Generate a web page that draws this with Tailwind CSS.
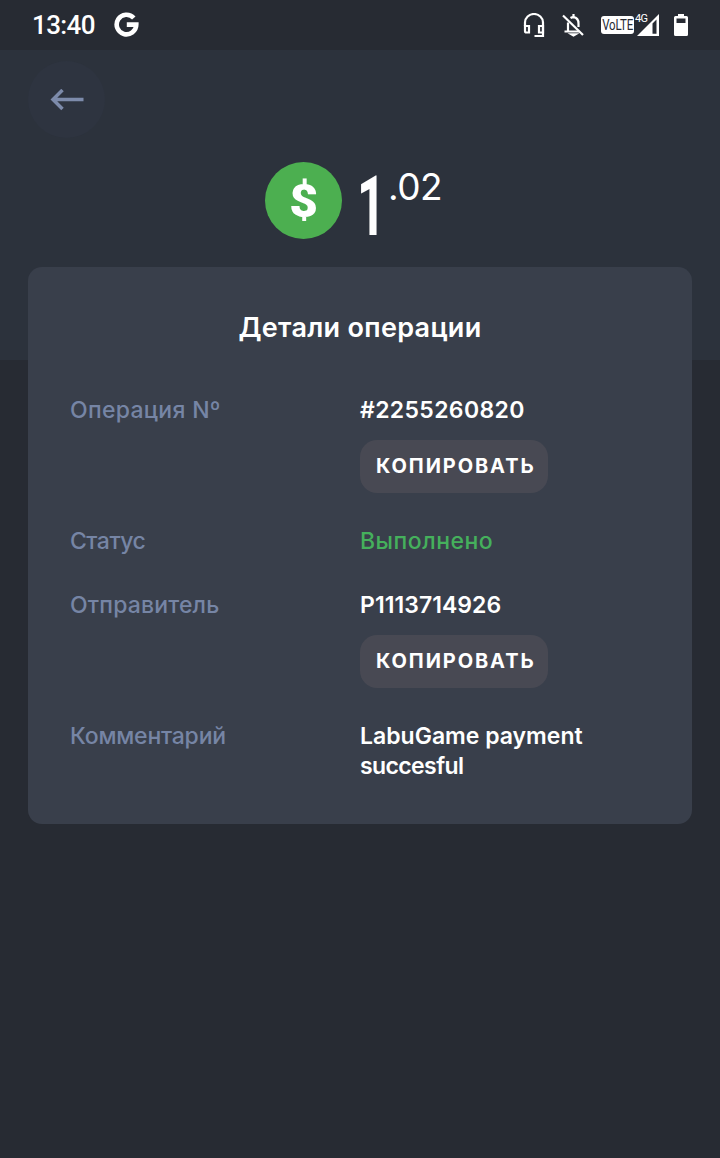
<!DOCTYPE html>
<html lang="ru">
<head>
    <meta charset="UTF-8">
    <meta name="viewport" content="width=device-width, initial-scale=1.0">
    <title>Детали операции</title>
    <script src="https://cdn.jsdelivr.net/npm/@tailwindcss/browser@4"></script>
</head>
<body class="bg-[#272b33] min-h-screen font-['Inter',sans-serif] text-white overflow-hidden">
    <!-- Status bar -->
    <div class="h-[50px] flex items-center justify-between px-8 font-['Roboto',sans-serif]">
        <div class="flex items-center gap-[19px]">
            <span class="text-[26px] leading-8 font-medium tracking-[-0.6px]">13:40</span>
            <svg class="w-[25px] h-[25px] -mt-px" viewBox="0 0 25 25" fill="none" stroke="#fff" stroke-width="4.6">
                <path d="M19.8 6A9.8 9.8 0 1 0 22.3 12.6H12.8"/>
            </svg>
        </div>
        <div class="flex items-center">
            <svg class="w-[22px] h-[25px] mr-[17px]" viewBox="0 0 22 25" fill="none" stroke="#fff" stroke-width="2.2">
                <path d="M2 13V9.5a9 8.5 0 0 1 18 0V23h-8.5"/>
                <path d="M2 13h4v6.5H3.5Q2 19.5 2 18zM20 13h-4v6.5h4z"/>
            </svg>
            <svg class="w-[22px] h-[24px] mr-[17px]" viewBox="0 0 22 24" fill="none" stroke="#fff" stroke-width="2.2">
                <path d="M1 2.500l20 19.500"/>
                <path d="M8.500 5Q9.800 4.200 11.500 4.200Q16.500 5 16.500 10.500V14M6 9.500V18.500H16M2.500 18.500H17"/>
                <path d="M9.500 21.300h4L11.500 22.500zM11.500 1v3"/>
            </svg>
            <div class="w-[33px] h-[18px] bg-white rounded-[3px] flex items-center justify-center">
                <span class="text-[14.5px] leading-none pt-[2px] text-[#272b33] -mx-2 scale-x-[0.79] tracking-[-0.1px]">VoLTE</span>
            </div>
            <div class="relative w-[26px] h-[24px] mr-[15px]">
                <span class="absolute left-[1px] top-0 text-[11px] leading-none tracking-[-0.6px]">4G</span>
                <svg class="w-[26px] h-[24px]" viewBox="0 0 26 24" fill="#fff">
                    <path fill-rule="evenodd" d="M3 23L25 1v22zM18.500 10.500V20.800h4V6.500z"/>
                </svg>
            </div>
            <svg class="w-[14px] h-[24px] -ml-px" viewBox="0 0 14 24" fill="#fff">
                <path fill-rule="evenodd" d="M4 1h6v2h2.500Q14 3 14 4.500v17Q14 23 12.500 23h-11Q0 23 0 21.500v-17Q0 3 1.500 3H4zM2.500 5.500v4.500h9V5.500z"/>
            </svg>
        </div>
    </div>

    <!-- Header with amount -->
    <header class="h-[310px] bg-[#2c323c] pt-[11px]">
        <button class="ml-7 w-[77px] h-[77px] rounded-full bg-[#2e3440] flex items-center justify-center">
            <svg class="w-[34px] h-[22px]" viewBox="0 0 34 22" fill="none" stroke="#7d8bab" stroke-width="3.5">
                <path d="M33.500 10.500H3M12.500 1L3 10.500l9.500 9.500"/>
            </svg>
        </button>
        <div class="ml-[265px] mt-6 h-[77px] flex items-start">
            <div class="w-[77px] h-[77px] rounded-full bg-[#4caf50] flex items-center justify-center">
                <span class="font-['Roboto',sans-serif] font-black text-[47px] leading-none scale-x-[1.06]">$</span>
            </div>
            <span class="ml-[15px] w-[30px] mt-[4px] text-[83px] leading-[82px] font-['Roboto',sans-serif] font-bold origin-left scale-x-[0.6]">1</span>
            <span class="ml-px mt-[6px] text-[37px] leading-[37px] tracking-[-0.5px]">.02</span>
        </div>
    </header>

    <!-- Details card -->
    <main class="-mt-[93px] mx-7 h-[557px] rounded-[14px] bg-[#393f4b] pt-[43px] px-[42px] relative">
        <h1 class="text-center text-[27px] leading-9 font-semibold tracking-[0.3px]">Детали операции</h1>
        <div class="mt-[49px] grid grid-cols-2 gap-y-[34px] text-[23px] leading-[30px] font-medium">
            <div class="text-[#7685a5] tracking-[0.3px]">Операция Nº</div>
            <div>
                <div class="font-semibold tracking-[0.35px]">#2255260820</div>
                <button class="mt-[15px] -mb-px block w-[188px] h-[53px] pl-4 pb-px rounded-[17px] bg-[#484953] text-left text-[20px] font-bold tracking-[1.9px]">КОПИРОВАТЬ</button>
            </div>
            <div class="text-[#7685a5] tracking-[-0.5px]">Статус</div>
            <div class="text-[#45b05c] tracking-[0.5px]">Выполнено</div>
            <div class="text-[#7685a5] tracking-[0.15px]">Отправитель</div>
            <div>
                <div class="font-semibold tracking-[0.05px]">P1113714926</div>
                <button class="mt-[15px] -mb-px block w-[188px] h-[53px] pl-4 pb-px rounded-[17px] bg-[#484953] text-left text-[20px] font-bold tracking-[1.9px]">КОПИРОВАТЬ</button>
            </div>
            <div class="text-[#7685a5] tracking-[-0.2px]">Комментарий</div>
            <div class="font-semibold">
                <div>LabuGame payment</div>
                <div class="tracking-[-0.6px]">succesful</div>
            </div>
        </div>
    </main>
</body>
</html>
